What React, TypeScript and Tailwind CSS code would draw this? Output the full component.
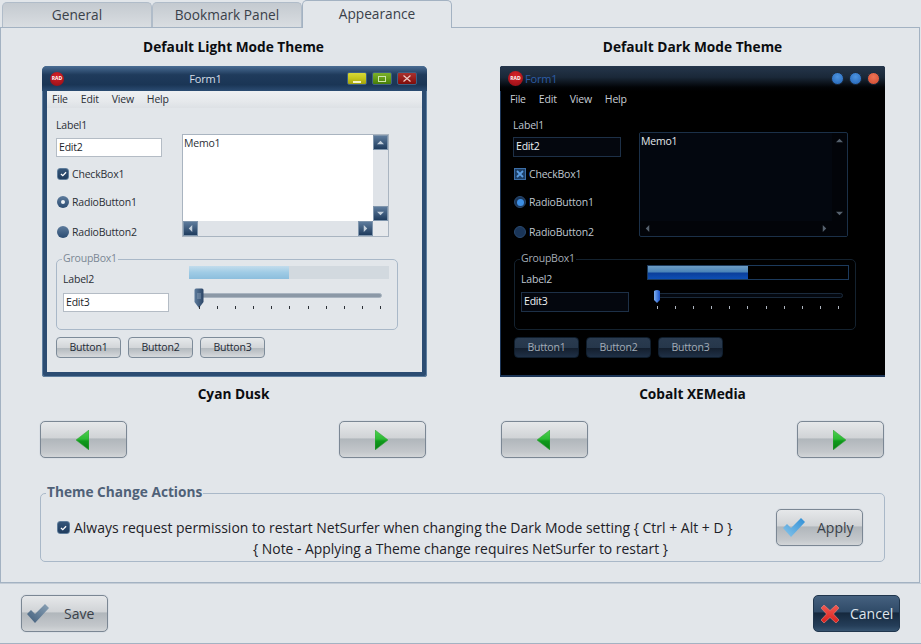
import React from "react";

const LIGHT = {
  frame: "bg-[#2b4c72] rounded-t-[5px] rounded-b-[3px] shadow-[inset_0_0_0_1px_#5f7f9f]",
  title: "bg-[linear-gradient(#4a6d94_0%,#1f3b5c_35%,#1a3555_75%,#2b4c72_100%)] text-[#d6dee7]",
  client: "bg-[#e2e6ea] mx-[5px] mb-[5px] pb-0",
  menu: "bg-[linear-gradient(#eef0f2,#e6e9ec_60%,#dde1e5)] text-[#2b2f36]",
  body: "pl-[9px]",
  text: "text-[#2b2f36]",
  edit: "bg-white border-[#b4bcc5] text-[#20242a] h-[19px] w-[106px]",
  editGap: "mt-[6px]",
  memo: "border-[#a9b4c0] bg-[#dfe3e8] mt-[17px] h-[103px] w-[207px]",
  memoText: "bg-white text-[#2b2f36]",
  scrollBtn: "bg-[linear-gradient(#5d7b9c,#1f3c5e)] border border-[#7f95ac]",
  arrow: "#c4d0dc",
  corner: "bg-[#e6e9ec]",
  group: "border-[#a9b8c8]",
  legend: "bg-[#e2e6ea] text-[#7b8794]",
  barWrap: "pt-[6px]",
  barBg: "bg-[#d2d9df] h-[13px] w-[200px]",
  barFill: "bg-[linear-gradient(#c2dcec,#9fcbe5_50%,#8cbedd)]",
  sliderGap: "mt-[9px]",
  track: "bg-[#8b98a6] border-[#a9b4c0] left-[6px]",
  tick: "bg-[#2b2f36]",
  btn: "border-[#7d8b99] text-[#1f2a36] bg-[linear-gradient(#e6e9eb,#d3d6d9_50%,#b4babf_55%,#d6d9dc)]",
  indent: "",
};

const DARK = {
  frame: "bg-black rounded-t-[3px] shadow-[inset_0_-2px_0_#1c3557,inset_1px_0_0_#1c3557,inset_0_1px_0_#1c3557]",
  title: "bg-[linear-gradient(#25364b_0%,#1a2838_45%,#020407_85%,#000_100%)] text-[#2c5ca6]",
  client: "bg-black mx-[5px] mb-[5px]",
  menu: "bg-black text-[#c8ced6]",
  body: "pl-[8px]",
  text: "text-[#bfc6cf]",
  edit: "bg-[#04070e] border-[#1d3047] text-[#eef1f4] h-[20px] w-[108px]",
  editGap: "mt-[5px]",
  memo: "border-[#1b3048] bg-[#020409] mt-[15px] h-[105px] w-[209px] rounded-[2px]",
  memoText: "bg-[#03070f] text-[#e3e7ec]",
  scrollBtn: "",
  arrow: "#56616e",
  corner: "bg-[#020409]",
  group: "border-[#14222f] ml-[1px]",
  legend: "bg-black text-[#a4acb6]",
  barWrap: "pt-[5px]",
  barBg: "bg-black border border-[#1c3a5c] h-[15px] w-[202px]",
  barFill: "bg-[linear-gradient(#6d9cc4,#4a84b8_45%,#0b3f9b_55%,#0d4fb5)]",
  sliderGap: "mt-[8px]",
  track: "bg-[#04080f] border-[#1a2a3c] left-[9px]",
  tick: "bg-[#aeb6c0]",
  btn: "border-[#0f1d2c] text-[#a3acb7] bg-[linear-gradient(#2a3b50,#26374b_50%,#141f2e_55%,#1f3046)]",
  indent: "ml-[1px]",
};

type Theme = typeof LIGHT;

const TICKS = [0, 1, 2, 3, 4, 5, 6, 7, 8, 9, 10];

function Triangle({ dir, fill, size = 7 }: { dir: "up" | "down" | "left" | "right"; fill: string; size?: number }) {
  const pts = {
    up: "0,5 4,1 8,5",
    down: "0,1 8,1 4,5",
    left: "5,0 5,8 1,4",
    right: "1,0 1,8 5,4",
  }[dir];
  const box = dir === "up" || dir === "down" ? "0 0 8 6" : "0 0 6 8";
  return (
    <svg viewBox={box} width={size} height={size} className="block">
      <polygon points={pts} fill={fill} />
    </svg>
  );
}

function RadLogo({ dark }: { dark: boolean }) {
  return (
    <div
      className={`flex items-center justify-center rounded-full bg-[radial-gradient(circle_at_50%_30%,#d8222a,#8f0d14)] text-[5px] font-bold leading-none tracking-normal text-white ${
        dark ? "h-[15px] w-[15px]" : "h-[14px] w-[14px]"
      }`}
    >
      RAD
    </div>
  );
}

function LightCaptionButtons() {
  return (
    <div className="flex gap-[5px] pr-[10px]">
      <div className="flex h-[13px] w-[20px] items-end justify-center rounded-[2px] border border-[#3f5f82] bg-[linear-gradient(#d8d838,#c4c41c_50%,#a3a30c)] pb-[1px]">
        <div className="h-[2px] w-[8px] bg-[#f3f3c8]" />
      </div>
      <div className="flex h-[13px] w-[20px] items-center justify-center rounded-[2px] border border-[#3f5f82] bg-[linear-gradient(#7cb02c,#649c18_50%,#467c0a)]">
        <div className="h-[6px] w-[8px] border border-[#cfe4b0]" />
      </div>
      <div className="flex h-[13px] w-[20px] items-center justify-center rounded-[2px] border border-[#3f5f82] bg-[linear-gradient(#a8322e,#981e1c_50%,#7e0d0a)]">
        <svg viewBox="0 0 8 7" width="8" height="7">
          <path d="M0.5 0.5L7.5 6.5M7.5 0.5L0.5 6.5" stroke="#eec9c4" strokeWidth="1.2" />
        </svg>
      </div>
    </div>
  );
}

function DarkCaptionButtons() {
  return (
    <div className="flex gap-[5px] pr-[5px]">
      <div className="h-[13px] w-[13px] rounded-full border border-[#1c2c40] bg-[radial-gradient(circle_at_50%_35%,#4d94e0,#2263b5)]" />
      <div className="h-[13px] w-[13px] rounded-full border border-[#1c2c40] bg-[radial-gradient(circle_at_50%_35%,#4d94e0,#2263b5)]" />
      <div className="h-[13px] w-[13px] rounded-full border border-[#1c2c40] bg-[radial-gradient(circle_at_50%_35%,#ee7355,#cf4a30)]" />
    </div>
  );
}

function CheckMark({ dark }: { dark: boolean }) {
  if (dark) {
    return (
      <div className="flex h-[12px] w-[12px] items-center justify-center border border-[#3d6fa8] bg-[#1d3f66]">
        <svg viewBox="0 0 8 8" width="8" height="8">
          <path d="M1 1L7 7M7 1L1 7" stroke="#5a9ce0" strokeWidth="1.8" />
        </svg>
      </div>
    );
  }
  return <LightCheck />;
}

function LightCheck({ size = "h-[12px] w-[12px]" }: { size?: string }) {
  return (
    <div className={`flex items-center justify-center rounded-[3px] border border-[#5f7d9b] bg-[linear-gradient(#355579,#1f3c5e)] ${size}`}>
      <svg viewBox="0 0 8 7" width="7" height="6">
        <path d="M1 3.5L3.2 5.5L7 1.5" fill="none" stroke="#fff" strokeWidth="1.5" />
      </svg>
    </div>
  );
}

function Radio({ on, dark }: { on: boolean; dark: boolean }) {
  if (dark) {
    return (
      <div className="flex h-[12px] w-[12px] items-center justify-center rounded-full border border-[#2a4a70] bg-[#1a3558]">
        {on && <div className="h-[7px] w-[7px] rounded-full bg-[#3d8fe4]" />}
      </div>
    );
  }
  return (
    <div className="flex h-[12px] w-[12px] items-center justify-center rounded-full bg-[linear-gradient(#5d7b9c,#2b4c72)]">
      {on && <div className="h-[4px] w-[4px] rounded-full bg-[#eef2f6]" />}
    </div>
  );
}

function Memo({ t }: { t: Theme }) {
  const btn = `flex h-[15px] w-[15px] items-center justify-center ${t.scrollBtn}`;
  return (
    <div className={`grid grid-cols-[1fr_15px] grid-rows-[1fr_15px] border ${t.memo}`}>
      <div className={`pl-[1px] pt-[1px] leading-[14px] ${t.memoText}`}>Memo1</div>
      <div className="flex flex-col justify-between">
        <div className={btn}>
          <Triangle dir="up" fill={t.arrow} />
        </div>
        <div className={btn}>
          <Triangle dir="down" fill={t.arrow} />
        </div>
      </div>
      <div className="flex justify-between">
        <div className={btn}>
          <Triangle dir="left" fill={t.arrow} />
        </div>
        <div className={btn}>
          <Triangle dir="right" fill={t.arrow} />
        </div>
      </div>
      <div className={t.corner} />
    </div>
  );
}

function SliderThumb({ dark }: { dark: boolean }) {
  return (
    <svg viewBox="0 0 10 20" width="10" height="20" className="absolute left-[5px] top-0">
      <defs>
        <linearGradient id={dark ? "thumbDark" : "thumbLight"} x1="0" y1="0" x2="1" y2="0">
          <stop offset="0" stopColor={dark ? "#7fb0f0" : "#5d7b9c"} />
          <stop offset="1" stopColor={dark ? "#1650c8" : "#2b4566"} />
        </linearGradient>
      </defs>
      <path
        d={dark ? "M2 3Q5 1 8 3V12L5 15L2 12Z" : "M0.5 2Q0.5 0.5 2 0.5H8Q9.5 0.5 9.5 2V14L5 20L0.5 14Z"}
        fill={`url(#${dark ? "thumbDark" : "thumbLight"})`}
      />
      {!dark && <path d="M3 6H7M3 8H7M3 10H7" stroke="#9fb2c6" strokeWidth="0.7" />}
    </svg>
  );
}

function Group({ t, dark }: { t: Theme; dark: boolean }) {
  return (
    <div className={`relative mt-[20px] flex h-[71px] w-[342px] rounded-[5px] border ${t.group}`}>
      <span className={`absolute -top-[9px] left-[5px] px-[1px] leading-[15px] ${t.legend}`}>GroupBox1</span>
      <div className="w-[132px] pl-[6px] pt-[12px]">
        <div className={`leading-[15px] ${t.text}`}>Label2</div>
        <div className={`${t.editGap} border pl-[2px] leading-[17px] ${t.edit}`}>Edit3</div>
      </div>
      <div className={`w-[201px] ${t.barWrap}`}>
        <div className={t.barBg}>
          <div className={`h-full w-1/2 ${t.barFill}`} />
        </div>
        <div className={`relative h-[21px] ${t.sliderGap}`}>
          <div className={`absolute top-[5px] h-[5px] w-[187px] rounded-full border ${t.track}`} />
          <SliderThumb dark={dark} />
          <div className="absolute bottom-0 left-[10px] flex w-[182px] justify-between">
            {TICKS.map((i) => (
              <div key={i} className={`h-[3px] w-px ${t.tick}`} />
            ))}
          </div>
        </div>
      </div>
    </div>
  );
}

function PreviewForm({ t, dark }: { t: Theme; dark: boolean }) {
  return (
    <div className={`flex h-[311px] w-[385px] flex-col overflow-hidden text-[10.5px] tracking-[-0.2px] ${t.frame}`}>
      <div className={`flex h-[25px] items-center pl-[8px] ${t.title}`}>
        <RadLogo dark={dark} />
        <div className={`flex-1 pt-[2px] text-[11px] ${dark ? "pl-[2px] text-left" : "text-center"}`}>Form1</div>
        {dark ? <DarkCaptionButtons /> : <LightCaptionButtons />}
      </div>
      <div className={`flex flex-1 flex-col ${t.client}`}>
        <div className={`flex h-[17px] items-center gap-[13px] pl-[5px] ${t.menu}`}>
          <span>File</span>
          <span>Edit</span>
          <span>View</span>
          <span>Help</span>
        </div>
        <div className={`flex flex-1 flex-col pt-[9px] ${t.body} ${t.text}`}>
          <div className="flex">
            <div className="w-[126px]">
              <div className="h-[15px] leading-[17px]">Label1</div>
              <div className={`${t.editGap} border pl-[2px] leading-[17px] ${t.edit}`}>Edit2</div>
              <div className="mt-[10px] flex h-[14px] items-center gap-[3px] pl-[1px]">
                <CheckMark dark={dark} />
                <span className="mt-[2px]">CheckBox1</span>
              </div>
              <div className="mt-[14px] flex h-[14px] items-center gap-[3px] pl-[1px]">
                <Radio on dark={dark} />
                <span className="mt-[2px]">RadioButton1</span>
              </div>
              <div className="mt-[16px] flex h-[14px] items-center gap-[3px] pl-[1px]">
                <Radio on={false} dark={dark} />
                <span className="mt-[2px]">RadioButton2</span>
              </div>
            </div>
            <Memo t={t} />
          </div>
          <Group t={t} dark={dark} />
          <div className={`mt-[7px] flex gap-[7px] ${t.indent}`}>
            {["Button1", "Button2", "Button3"].map((b) => (
              <div key={b} className={`flex h-[21px] w-[65px] items-center justify-center rounded-[4px] border ${t.btn}`}>
                {b}
              </div>
            ))}
          </div>
        </div>
      </div>
    </div>
  );
}

const GLOSS =
  "flex h-[37px] w-[87px] items-center rounded-[5px] border border-[#7b8794] bg-[linear-gradient(#e6e8ea,#d0d3d6_46%,#b0b6bb_48%,#c3c7cb_85%,#d2d5d8)] shadow-[0_0_1px_#9aa6b2]";

function Arrow({ dir, id }: { dir: "left" | "right"; id: string }) {
  return (
    <svg viewBox="0 0 13 20" width="13" height="20">
      <defs>
        <linearGradient id={id} x1="0" y1="0" x2="0" y2="1">
          <stop offset="0" stopColor="#4fd050" />
          <stop offset="0.45" stopColor="#2cba34" />
          <stop offset="0.55" stopColor="#0f9a1c" />
          <stop offset="1" stopColor="#0a7f14" />
        </linearGradient>
      </defs>
      <polygon
        points={dir === "left" ? "13,0 13,20 0,10" : "0,0 0,20 13,10"}
        fill={`url(#${id})`}
        stroke="#3aa53f"
        strokeWidth="0.6"
      />
    </svg>
  );
}

function NavButton({ dir, id }: { dir: "left" | "right"; id: string }) {
  return (
    <div className={`${GLOSS} justify-center pr-[2px]`}>
      <Arrow dir={dir} id={id} />
    </div>
  );
}

function CheckIcon({ id, from, to }: { id: string; from: string; to: string }) {
  return (
    <svg viewBox="0 0 22 19" width="22" height="19">
      <defs>
        <linearGradient id={id} x1="1" y1="0" x2="0" y2="1">
          <stop offset="0" stopColor={from} />
          <stop offset="1" stopColor={to} />
        </linearGradient>
      </defs>
      <polygon points="0,10 4,6 8,10 18,0 22,4 8,19" fill={`url(#${id})`} />
    </svg>
  );
}

function XIcon() {
  return (
    <svg viewBox="0 0 18 18" width="18" height="18">
      <defs>
        <linearGradient id="xRed" x1="0" y1="0" x2="0" y2="1">
          <stop offset="0" stopColor="#f25a52" />
          <stop offset="1" stopColor="#d81f1c" />
        </linearGradient>
      </defs>
      <polygon
        points="0,3 3,0 9,5.5 15,0 18,3 12.5,9 18,15 15,18 9,12.5 3,18 0,15 5.5,9"
        fill="url(#xRed)"
        stroke="#e98a82"
        strokeWidth="0.6"
      />
    </svg>
  );
}

function ThemeColumn({
  heading,
  name,
  t,
  dark,
  prefix,
}: {
  heading: string;
  name: string;
  t: Theme;
  dark: boolean;
  prefix: string;
}) {
  return (
    <div className={dark ? "w-[385px]" : "w-[387px]"}>
      <div className="h-[20px] text-center text-[13.7px] font-bold leading-[20px] text-[#0b0d10]">{heading}</div>
      <div className={`mt-[9px] ${dark ? "" : "pl-[2px]"}`}>
        <PreviewForm t={t} dark={dark} />
      </div>
      <div className="mt-[7px] h-[20px] text-center text-[13.7px] font-bold leading-[20px] text-[#0b0d10]">{name}</div>
      <div className={`mt-[17px] flex justify-between ${dark ? "px-[1px]" : "pr-[1px]"}`}>
        <NavButton dir="left" id={`${prefix}L`} />
        <NavButton dir="right" id={`${prefix}R`} />
      </div>
    </div>
  );
}

export default function App() {
  return (
    <div className="h-[644px] w-[921px] overflow-hidden bg-[#e2e6ea] font-['Open_Sans',sans-serif] text-[#2b2f36]">
      <div className="flex h-[27px] items-end pl-[2px] text-[13.7px] text-[#3a4149]">
        <div className="flex h-[25px] w-[150px] items-center justify-center rounded-t-[5px] border border-b-0 border-[#b0bcc9] bg-[linear-gradient(#c4cad0,#d9dde1)]">
          General
        </div>
        <div className="flex h-[25px] w-[150px] items-center justify-center rounded-t-[5px] border border-b-0 border-[#b0bcc9] bg-[linear-gradient(#c4cad0,#d9dde1)]">
          Bookmark Panel
        </div>
        <div className="relative z-10 -mb-px flex h-[28px] w-[150px] items-center justify-center rounded-t-[5px] border border-b-0 border-[#a3b2c2] bg-[#e2e6ea] pb-[1px]">
          Appearance
        </div>
      </div>

      <div className="h-[556px] w-[920px] border border-[#a3b2c2] pl-[39px] pt-[9px]">
        <div className="flex gap-[73px]">
          <ThemeColumn heading="Default Light Mode Theme" name="Cyan Dusk" t={LIGHT} dark={false} prefix="lt" />
          <ThemeColumn heading="Default Dark Mode Theme" name="Cobalt XEMedia" t={DARK} dark prefix="dk" />
        </div>

        <div className="relative mt-[35px] flex h-[69px] w-[845px] items-start rounded-[5px] border border-[#a9b8c8] pl-[16px] pt-[15px]">
          <span className="absolute -top-[11px] left-[5px] bg-[#e2e6ea] px-[1px] text-[13.7px] font-bold leading-[18px] text-[#4f6178]">
            Theme Change Actions
          </span>
          <div className="mt-[8px] w-[719px] text-[13.9px] leading-[21px] text-[#1d2127]">
            <div className="flex h-[21px] items-center gap-[4px] text-[13.97px]">
              <LightCheck size="h-[13px] w-[13px]" />
              Always request permission to restart NetSurfer when changing the Dark Mode setting {"{ Ctrl + Alt + D }"}
            </div>
            <div className="pl-[196px]">{"{ Note - Applying a Theme change requires NetSurfer to restart }"}</div>
          </div>
          <div className={`${GLOSS} gap-[12px] pl-[6px] text-[14px] text-[#3a4149]`}>
            <CheckIcon id="applyChk" from="#2f8fd6" to="#8ac6ea" />
            Apply
          </div>
        </div>
      </div>

      <div className="flex h-[61px] w-[921px] items-center justify-between border-y border-[#a3b2c2] border-t-[#c3ccd6] px-[21px]">
        <div className={`${GLOSS} gap-[15px] pl-[5px] text-[14px] text-[#3a4149]`}>
          <CheckIcon id="saveChk" from="#8ba2b6" to="#3f5c7a" />
          Save
        </div>
        <div className="flex h-[37px] w-[87px] items-center gap-[11px] rounded-[5px] border border-[#20364d] bg-[linear-gradient(#45617f,#2f4a67_46%,#15283d_48%,#253e59_85%,#36536f)] pl-[7px] text-[14px] text-[#dfe5ec]">
          <XIcon />
          Cancel
        </div>
      </div>
    </div>
  );
}
